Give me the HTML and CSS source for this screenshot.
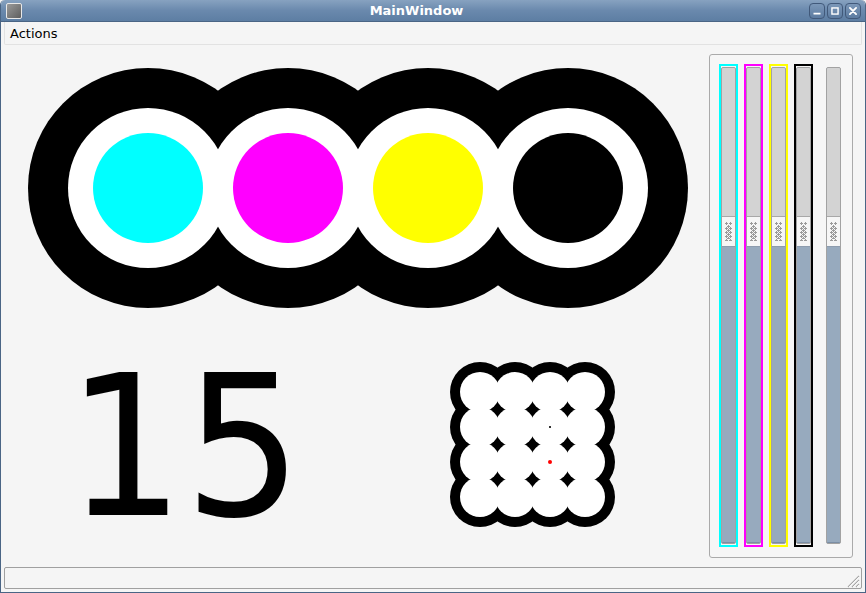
FILE: index.html
```html
<!DOCTYPE html>
<html>
<head>
<meta charset="utf-8">
<link rel="stylesheet" href="styles.css">
</head>
<body>
<div class="window">
  <div class="titlebar">
    <div class="app-icon"></div>
    <div class="title">MainWindow</div>
    <div class="wbtns">
      <div class="wbtn"><svg width="16" height="16" viewBox="0 0 16 16"><rect x="4" y="10" width="8" height="2" fill="#fff"/></svg></div>
      <div class="wbtn"><svg width="16" height="16" viewBox="0 0 16 16"><rect x="4.5" y="4.5" width="7" height="7" fill="none" stroke="#fff" stroke-width="1.6"/></svg></div>
      <div class="wbtn"><svg width="16" height="16" viewBox="0 0 16 16"><path d="M4.5 4.5 L11.5 11.5 M11.5 4.5 L4.5 11.5" stroke="#fff" stroke-width="2.2" stroke-linecap="round"/></svg></div>
    </div>
  </div>
  <div class="menubar"><span class="menu-item">Actions</span></div>
  <div class="central">
    <svg class="canvas" width="709" height="522" viewBox="0 45 709 522">
      <g fill="#000">
        <circle cx="148" cy="188" r="120"/>
        <circle cx="288" cy="188" r="120"/>
        <circle cx="428" cy="188" r="120"/>
        <circle cx="568" cy="188" r="120"/>
      </g>
      <g fill="#fff">
        <circle cx="148" cy="188" r="80"/>
        <circle cx="288" cy="188" r="80"/>
        <circle cx="428" cy="188" r="80"/>
        <circle cx="568" cy="188" r="80"/>
      </g>
      <circle cx="148" cy="188" r="55" fill="#00ffff"/>
      <circle cx="288" cy="188" r="55" fill="#ff00ff"/>
      <circle cx="428" cy="188" r="55" fill="#ffff00"/>
      <circle cx="568" cy="188" r="55" fill="#000"/>
      <text class="big-num" x="0" y="0" transform="translate(66.5 515) scale(0.945 1)">15</text>
      <g fill="#000">
        <circle cx="480" cy="392" r="30"/><circle cx="515" cy="392" r="30"/><circle cx="550" cy="392" r="30"/><circle cx="585" cy="392" r="30"/>
        <circle cx="480" cy="427" r="30"/><circle cx="515" cy="427" r="30"/><circle cx="550" cy="427" r="30"/><circle cx="585" cy="427" r="30"/>
        <circle cx="480" cy="462" r="30"/><circle cx="515" cy="462" r="30"/><circle cx="550" cy="462" r="30"/><circle cx="585" cy="462" r="30"/>
        <circle cx="480" cy="497" r="30"/><circle cx="515" cy="497" r="30"/><circle cx="550" cy="497" r="30"/><circle cx="585" cy="497" r="30"/>
      </g>
      <g fill="#fff">
        <circle cx="480" cy="392" r="20"/><circle cx="515" cy="392" r="20"/><circle cx="550" cy="392" r="20"/><circle cx="585" cy="392" r="20"/>
        <circle cx="480" cy="427" r="20"/><circle cx="515" cy="427" r="20"/><circle cx="550" cy="427" r="20"/><circle cx="585" cy="427" r="20"/>
        <circle cx="480" cy="462" r="20"/><circle cx="515" cy="462" r="20"/><circle cx="550" cy="462" r="20"/><circle cx="585" cy="462" r="20"/>
        <circle cx="480" cy="497" r="20"/><circle cx="515" cy="497" r="20"/><circle cx="550" cy="497" r="20"/><circle cx="585" cy="497" r="20"/>
      </g>
      <rect x="549" y="426" width="2" height="2" fill="#333"/>
      <circle cx="550" cy="462" r="2" fill="#ff0000"/>
    </svg>
    <div class="groupbox">
      <div class="slider-frame cyan"><div class="groove"><div class="g-top"></div><div class="handle"><svg class="grip" width="7" height="19"><use href="#gripdots"/></svg></div><div class="g-bottom"></div></div></div>
      <div class="slider-frame magenta"><div class="groove"><div class="g-top"></div><div class="handle"><svg class="grip" width="7" height="19"><use href="#gripdots"/></svg></div><div class="g-bottom"></div></div></div>
      <div class="slider-frame yellow"><div class="groove"><div class="g-top"></div><div class="handle"><svg class="grip" width="7" height="19"><use href="#gripdots"/></svg></div><div class="g-bottom"></div></div></div>
      <div class="slider-frame black"><div class="groove"><div class="g-top"></div><div class="handle"><svg class="grip" width="7" height="19"><use href="#gripdots"/></svg></div><div class="g-bottom"></div></div></div>
      <div class="slider-frame plain"><div class="groove"><div class="g-top"></div><div class="handle"><svg class="grip" width="7" height="19"><use href="#gripdots"/></svg></div><div class="g-bottom"></div></div></div>
    </div>
  </div>
  <div class="statusbar">
    <svg class="sizegrip" width="14" height="14" viewBox="0 0 14 14">
      <path d="M13 2 L2 13 M13 6 L6 13 M13 10 L10 13" stroke="#a8a8a8" stroke-width="1.2"/>
      <path d="M13 3 L3 13 M13 7 L7 13 M13 11 L11 13" stroke="#ffffff" stroke-width="0.8"/>
    </svg>
  </div>
</div>
<svg class="defs" width="0" height="0">
  <defs>
    <g id="gripdots" fill="#9a9a9a">
      <rect x="1" y="0" width="1" height="1"/><rect x="5" y="0" width="1" height="1"/>
      <rect x="0" y="1" width="3" height="1"/><rect x="4" y="1" width="3" height="1"/>
      <rect x="1" y="2" width="1" height="1"/><rect x="5" y="2" width="1" height="1"/>
      <rect x="3" y="3" width="1" height="1"/>
      <rect x="2" y="4" width="3" height="1"/>
      <rect x="1" y="5" width="1" height="1"/><rect x="3" y="5" width="1" height="1"/><rect x="5" y="5" width="1" height="1"/>
      <rect x="0" y="6" width="3" height="1"/><rect x="4" y="6" width="3" height="1"/>
      <rect x="1" y="7" width="1" height="1"/><rect x="3" y="7" width="1" height="1"/><rect x="5" y="7" width="1" height="1"/>
      <rect x="2" y="8" width="3" height="1"/>
      <rect x="1" y="9" width="1" height="1"/><rect x="3" y="9" width="1" height="1"/><rect x="5" y="9" width="1" height="1"/>
      <rect x="0" y="10" width="3" height="1"/><rect x="4" y="10" width="3" height="1"/>
      <rect x="1" y="11" width="1" height="1"/><rect x="3" y="11" width="1" height="1"/><rect x="5" y="11" width="1" height="1"/>
      <rect x="2" y="12" width="3" height="1"/>
      <rect x="1" y="13" width="1" height="1"/><rect x="3" y="13" width="1" height="1"/><rect x="5" y="13" width="1" height="1"/>
      <rect x="0" y="14" width="3" height="1"/><rect x="4" y="14" width="3" height="1"/>
      <rect x="1" y="15" width="1" height="1"/><rect x="3" y="15" width="1" height="1"/><rect x="5" y="15" width="1" height="1"/>
      <rect x="2" y="16" width="3" height="1"/>
      <rect x="1" y="17" width="1" height="1"/><rect x="5" y="17" width="1" height="1"/>
      <rect x="0" y="18" width="3" height="1"/><rect x="4" y="18" width="3" height="1"/>
    </g>
  </defs>
</svg>
</body>
</html>
```
FILE: styles.css
```css
html, body {
  margin: 0;
  padding: 0;
  background: #f4f4f4;
}
body {
  font-family: "DejaVu Sans", "Liberation Sans", sans-serif;
  width: 866px;
  height: 593px;
  overflow: hidden;
}
.defs {
  position: absolute;
  width: 0;
  height: 0;
}
.window {
  box-sizing: border-box;
  width: 866px;
  height: 593px;
  border: 1px solid #4a6585;
  border-top: none;
  border-radius: 5px 5px 0 0;
  background: #f5f5f5;
  display: flex;
  flex-direction: column;
  overflow: hidden;
}
.titlebar {
  height: 22px;
  margin: 0 -1px;
  flex: none;
  display: flex;
  align-items: center;
  background: linear-gradient(#87a2c0, #6a89ad 50%, #5d7ea3);
  border-radius: 5px 5px 0 0;
  border-bottom: 1px solid #4a6585;
  box-sizing: border-box;
}
.app-icon {
  width: 14px;
  height: 14px;
  margin-left: 6px;
  border: 1px solid #e8e8e8;
  border-radius: 2px;
  background: linear-gradient(135deg, #9a9a9a, #5e5e5e);
  flex: none;
}
.title {
  flex: 1;
  text-align: center;
  color: #ffffff;
  font-weight: bold;
  font-size: 13px;
  padding-left: 2px;
}
.wbtns {
  display: flex;
  gap: 2px;
  margin-right: 5px;
}
.wbtn {
  width: 16px;
  height: 16px;
  box-sizing: border-box;
  border: 1px solid #41597a;
  border-radius: 4px;
  background: linear-gradient(#7b97b8, #5d7ca1);
  display: flex;
  align-items: center;
  justify-content: center;
}
.wbtn svg {
  width: 14px;
  height: 14px;
}
.menubar {
  height: 22px;
  flex: none;
  margin: 0 3px;
  border: 1px solid #e2e2e2;
  border-top: none;
  border-radius: 0 0 2px 2px;
  display: flex;
  align-items: center;
  font-size: 13px;
  color: #000;
}
.menu-item {
  padding-left: 5px;
}
.central {
  height: 522px;
  flex: none;
  display: flex;
  margin-left: -1px;
}
.canvas {
  display: block;
  flex: none;
}
.big-num {
  font-family: "DejaVu Sans", sans-serif;
  font-size: 196px;
  fill: #000;
}
.groupbox {
  box-sizing: border-box;
  width: 144px;
  height: 504px;
  margin-top: 9px;
  border: 1px solid #aaaaaa;
  border-radius: 3px;
  padding: 9px 0 0 9px;
  display: flex;
  gap: 6px;
  align-items: flex-start;
  background: #f6f6f6;
}
.slider-frame {
  box-sizing: border-box;
  width: 19px;
  height: 483px;
  border: 2px solid transparent;
  padding: 1px 0;
}
.slider-frame.cyan { border-color: #00ffff; }
.slider-frame.magenta { border-color: #ff00ff; }
.slider-frame.yellow { border-color: #ffff00; }
.slider-frame.black { border-color: #000000; }
.slider-frame.plain { margin-left: 5px; }
.groove {
  box-sizing: border-box;
  width: 15px;
  height: 477px;
  border: 1px solid #a2a2a2;
  border-radius: 2px;
  display: flex;
  flex-direction: column;
  overflow: hidden;
  background: #97aabe;
}
.g-top {
  height: 148px;
  background: #d3d3d3;
  flex: none;
}
.handle {
  box-sizing: border-box;
  height: 31px;
  flex: none;
  background: #f6f6f6;
  border-top: 1px solid #a8a8a8;
  border-bottom: 1px solid #8d9cae;
  display: flex;
  align-items: center;
  justify-content: center;
}
.grip { display: block; }
.g-bottom {
  flex: 1;
  background: #97aabe;
  border-bottom: 1px solid #7b8ea4;
}
.statusbar {
  box-sizing: border-box;
  height: 22px;
  margin: 0 3px;
  border: 1px solid #a0a0a0;
  border-radius: 2px;
  position: relative;
  flex: none;
}
.sizegrip {
  position: absolute;
  right: 1px;
  bottom: 0;
}
```
